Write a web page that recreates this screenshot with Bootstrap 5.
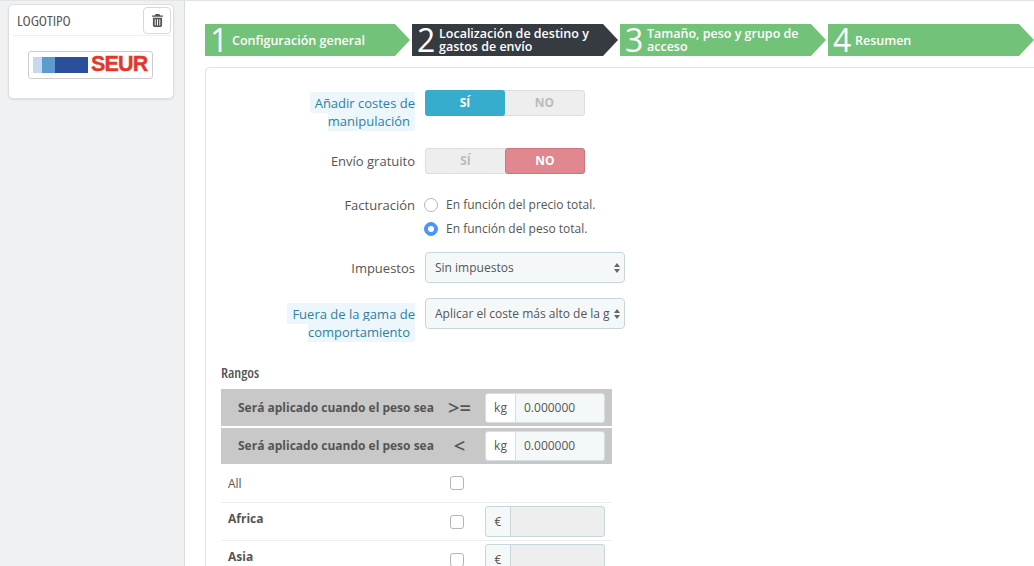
<!DOCTYPE html>
<html lang="es">
<head>
    <meta charset="UTF-8">
    <title>Transportista</title>
    <link rel="stylesheet" href="https://cdn.jsdelivr.net/npm/bootstrap@5.3.3/dist/css/bootstrap.min.css">
    <style>
        html, body { height: 566px; overflow: hidden; }
        body { background: #eff1f2; font-family: "Open Sans", sans-serif; font-size: 12px; color: #555; }
        .page-wrap { height: 566px; border-top: 1px solid #e2e4e5; }
        .side-col { width: 184px; padding: 3px 10px 0 8px; flex: none; }
        .logo-panel { background: #fff; border: 1px solid #dcdfe1; border-radius: 5px; height: 95px; padding: 0 2px 0 4px; box-shadow: 0 1px 2px rgba(0,0,0,.08); }
        .logo-head { height: 31px; border-bottom: 1px solid #eee; padding: 1px 0 0 4px; }
        .cond-title { font-family: "Open Sans", sans-serif; font-stretch: 75%; font-size: 15px; color: #555; }
        .trash-btn { width: 28px; height: 27px; padding: 0; border: 1px solid #d8d8d8; border-radius: 4px; background: #fff; }
        .logo-box { width: 125px; height: 28px; margin: 15px 0 0 15px; border: 1px solid #ccc; border-radius: 3px; padding: 0 4px; }
        .logo-bar { width: 9px; height: 16px; }
        .logo-word { font-family: "Liberation Sans", sans-serif; font-weight: 700; font-size: 21.5px; letter-spacing: -.8px; color: #e2382c; line-height: 1; margin-left: 3px; -webkit-text-stroke: .4px #e2382c; }
        .main-col { background: #fff; border-left: 1px solid #d9dcde; padding: 23px 0 0 20px; min-width: 0; flex: 1; }
        .wizard-step { width: 206px; height: 32px; margin-right: 2px; background: #72c279; color: #fff; clip-path: polygon(0 0, calc(100% - 15px) 0, 100% 50%, calc(100% - 15px) 100%, 0 100%); line-height: 1; flex: none; }
        .wizard-step:first-child { width: 205px; }
        .wizard-step.is-active { background: #363a41; }
        .step-num { font-size: 32px; padding-left: 5px; width: 27px; flex: none; }
        .step-text { font-size: 12.5px; font-weight: 600; line-height: 13px; }
        .form-panel { margin-top: 11px; border: 1px solid #dfe1e2; border-radius: 5px 0 0 0; border-right: 0; padding: 22px 0 0 15px; height: 520px; }
        .form-line { margin-bottom: 18px; }
        .label-col { width: 204px; padding-right: 10px; text-align: right; font-size: 13px; line-height: 18px; flex: none; color: #555; }
        .hint-text { color: #2f7fa6; background: #edf6fb; padding: 2px 5px 1px; border-radius: 2px; }
        .switch-box { width: 160px; height: 26px; background: #eee; border: 1px solid #ddd; border-radius: 3px; font-weight: 700; font-size: 12px; color: #bbb; }
        .switch-box span { flex: 1; text-align: center; line-height: 24px; }
        .switch-box .switch-yes { flex: none; width: 80px; background: #36adcd; color: #fff; border-radius: 3px; margin: -1px 0 -1px -1px; line-height: 26px; }
        .switch-box .switch-no { flex: none; width: 80px; background: #e0878f; color: #fff; border: 1px solid #cf747d; border-radius: 3px; margin: -1px -1px -1px 0; }
        .choice-line { height: 18px; gap: 8px; margin-left: -1px; }
        .choice-line + .choice-line { margin-top: 6px; }
        .choice-line .form-check-input { width: 14px; height: 14px; margin: 0; border-color: #b5b5b5; }
        .choice-line .form-check-input:checked { background-color: #4a95f5; border-color: #4a95f5; }
        .shop-select { width: 200px; height: 31px; background-color: #f5f8f9; border: 1px solid #c7d6db; border-radius: 4px; padding: 0 14px 0 9px; font-size: 12px; color: #555; background-size: 8px 12px; background-position: right 3px center; background-image: url("data:image/svg+xml,%3csvg xmlns='http://www.w3.org/2000/svg' viewBox='0 0 8 12'%3e%3cpath fill='%23666' d='M4 1l3 4H1zM4 11L1 7h6z'/%3e%3c/svg%3e"); }
        .range-title { margin: 0 0 7px 0; padding-top: 1px; line-height: 18px; font-size: 14.5px; font-weight: 600; }
        .range-table { width: 391px; font-size: 12px; }
        .range-row { background: #c8c8c8; height: 37px; font-weight: 700; color: #555; }
        .range-row + .range-row { margin-top: 2px; height: 36px; }
        .range-label { width: 213px; padding-left: 17px; flex: none; }
        .range-op { width: 51px; text-align: center; font-size: 20px; font-weight: 600; flex: none; }
        .shop-group { width: 120px; height: 30px; flex: none; flex-wrap: nowrap; }
        .shop-group .input-group-text { font-size: 12px; padding: 0; justify-content: center; width: 31px; background: #fff; color: #555; border-color: #d3dfe3; border-radius: 3px 0 0 3px; }
        .shop-group .form-control { font-size: 12px; padding: 0 8px; min-width: 0; background: #f5f8f9; color: #555; border-color: #d3dfe3; border-radius: 0 3px 3px 0; }
        .shop-group.is-money { height: 31px; }
        .shop-group.is-money .input-group-text { width: 26px; background: #f5f8f9; border-color: #c7d6db; }
        .shop-group.is-money .form-control { background: #eee; border-color: #c7d6db; }
        .zone-row { height: 38px; border-bottom: 1px solid #eee; }
        .zone-row.is-first { height: 39px; }
        .zone-name { width: 229px; padding-left: 7px; flex: none; }
        .zone-row .form-check-input { width: 14px; height: 14px; margin: 0 21px 0 0; border-color: #b5b5b5; flex: none; }
        .zone-all { padding-top: 2px; }
        .zone-lift { margin-top: -6px; }
    </style>
</head>
<body>
    <div class="page-wrap d-flex">
        <div class="side-col">
            <div class="logo-panel">
                <div class="logo-head d-flex justify-content-between align-items-center">
                    <span class="cond-title">LOGOTIPO</span>
                    <button class="trash-btn d-flex align-items-center justify-content-center" type="button" aria-label="Eliminar">
                        <svg width="11" height="13" viewBox="0 0 12 14"><path fill="#555" d="M4 0h4l1 1.500h3v1.500H0V1.500h3zM1 4h10v8.500A1.500 1.500 0 0 1 9.500 14h-7A1.500 1.500 0 0 1 1 12.500zm2 1.500v7h1v-7zm2.500 0v7h1v-7zm2.500 0v7h1v-7z"/></svg>
                    </button>
                </div>
                <div class="logo-box d-flex align-items-center">
                    <div class="logo-bar" style="background:#c6d9f0"></div>
                    <div class="logo-bar" style="background:#5b9bcd;width:13px"></div>
                    <div class="logo-bar" style="background:#2b4f9b;width:33px"></div>
                    <span class="logo-word">SEUR</span>
                </div>
            </div>
        </div>
        <div class="main-col">
            <div class="d-flex">
                <div class="wizard-step d-flex align-items-center"><span class="step-num">1</span><span class="step-text">Configuración general</span></div>
                <div class="wizard-step is-active d-flex align-items-center"><span class="step-num">2</span><span class="step-text">Localización de destino y gastos de envío</span></div>
                <div class="wizard-step d-flex align-items-center"><span class="step-num">3</span><span class="step-text">Tamaño, peso y grupo de acceso</span></div>
                <div class="wizard-step d-flex align-items-center"><span class="step-num">4</span><span class="step-text">Resumen</span></div>
            </div>
            <div class="form-panel">
                <div class="form-line d-flex">
                    <div class="label-col pt-1"><span class="hint-text">Añadir costes de manipulación</span></div>
                    <div class="switch-box d-flex"><span class="switch-yes">SÍ</span><span>NO</span></div>
                </div>
                <div class="form-line d-flex align-items-center" style="margin-bottom:22px">
                    <div class="label-col">Envío gratuito</div>
                    <div class="switch-box d-flex"><span>SÍ</span><span class="switch-no">NO</span></div>
                </div>
                <div class="form-line d-flex" style="margin-bottom:14px">
                    <div class="label-col">Facturación</div>
                    <div>
                        <div class="choice-line d-flex align-items-center"><input class="form-check-input" type="radio" name="billing">En función del precio total.</div>
                        <div class="choice-line d-flex align-items-center"><input class="form-check-input" type="radio" name="billing" checked>En función del peso total.</div>
                    </div>
                </div>
                <div class="form-line d-flex align-items-center" style="margin-bottom:15px">
                    <div class="label-col">Impuestos</div>
                    <select class="form-select shop-select"><option>Sin impuestos</option></select>
                </div>
                <div class="form-line d-flex" style="margin-bottom:22px">
                    <div class="label-col" style="padding-top:7px"><span class="hint-text">Fuera de la gama de comportamiento</span></div>
                    <select class="form-select shop-select"><option>Aplicar el coste más alto de la gama</option></select>
                </div>
                <div class="cond-title range-title">Rangos</div>
                <div class="range-table">
                    <div class="range-row d-flex align-items-center">
                        <div class="range-label">Será aplicado cuando el peso sea</div>
                        <div class="range-op">&gt;=</div>
                        <div class="input-group shop-group"><span class="input-group-text">kg</span><input class="form-control" type="text" value="0.000000"></div>
                    </div>
                    <div class="range-row d-flex align-items-center">
                        <div class="range-label">Será aplicado cuando el peso sea</div>
                        <div class="range-op">&lt;</div>
                        <div class="input-group shop-group"><span class="input-group-text">kg</span><input class="form-control" type="text" value="0.000000"></div>
                    </div>
                    <div class="zone-row is-first d-flex align-items-center">
                        <div class="zone-name zone-all">All</div><input class="form-check-input" type="checkbox">
                    </div>
                    <div class="zone-row d-flex align-items-center">
                        <div class="zone-name zone-lift fw-bold">Africa</div><input class="form-check-input" type="checkbox">
                        <div class="input-group shop-group is-money"><span class="input-group-text">€</span><input class="form-control" type="text" disabled></div>
                    </div>
                    <div class="zone-row d-flex align-items-center">
                        <div class="zone-name zone-lift fw-bold">Asia</div><input class="form-check-input" type="checkbox">
                        <div class="input-group shop-group is-money"><span class="input-group-text">€</span><input class="form-control" type="text" disabled></div>
                    </div>
                </div>
            </div>
        </div>
    </div>
    <script src="https://cdn.jsdelivr.net/npm/bootstrap@5.3.3/dist/js/bootstrap.bundle.min.js"></script>
</body>
</html>
